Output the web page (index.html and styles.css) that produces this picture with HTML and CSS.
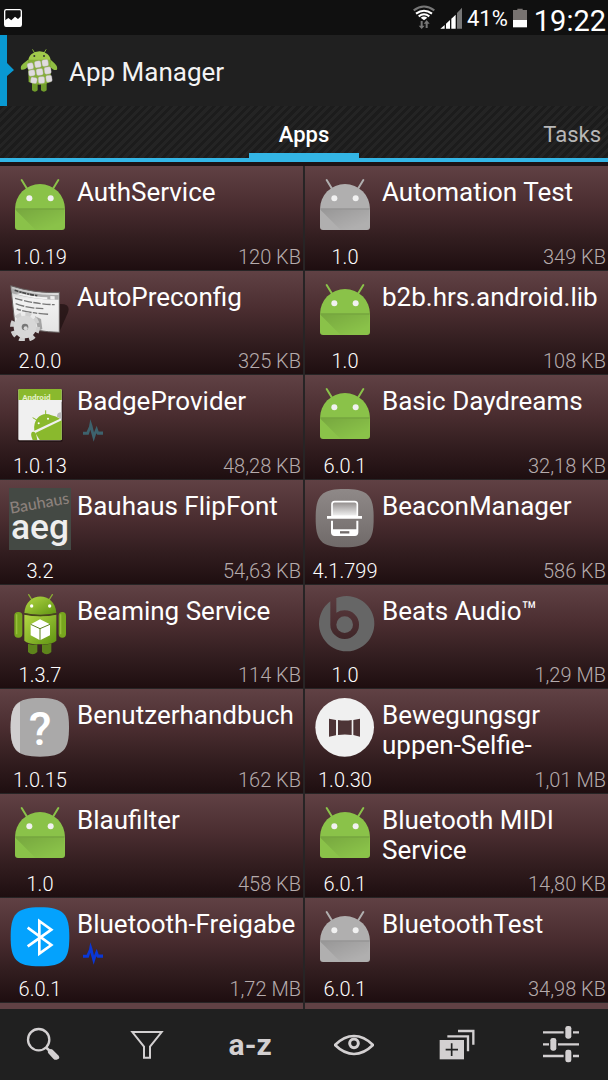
FILE: index.html
```html
<!DOCTYPE html>
<html lang="de">
<head>
<meta charset="utf-8">
<meta name="viewport" content="width=device-width, initial-scale=1">
<title>App Manager</title>
<link rel="stylesheet" href="styles.css">
</head>
<body>
<svg class="defs" aria-hidden="true">
  <defs>
    <linearGradient id="limeBody" x1="0" y1="0" x2="1" y2="1"><stop offset="0" stop-color="#b4d845"/><stop offset="1" stop-color="#5f9412"/></linearGradient>
    <linearGradient id="paper" x1="0" y1="0" x2="0" y2="1"><stop offset="0" stop-color="#b9b9b9"/><stop offset=".3" stop-color="#f2f2f2"/><stop offset="1" stop-color="#e4e4e4"/></linearGradient>
    <linearGradient id="stone" x1="0" y1="0" x2="0" y2="1"><stop offset="0" stop-color="#8f8988"/><stop offset="1" stop-color="#706a69"/></linearGradient>
    <linearGradient id="screen" x1="0" y1="0" x2="0" y2="1"><stop offset="0" stop-color="#8f8a89"/><stop offset="1" stop-color="#f4f4f4"/></linearGradient>
    <linearGradient id="fold" x1="0" y1="0" x2="1" y2="1"><stop offset="0" stop-color="#000" stop-opacity=".14"/><stop offset=".8" stop-color="#000" stop-opacity="0"/></linearGradient>
    <symbol id="head" viewBox="27 27 186 186">
      <path d="M65 45l16 26M175 45l-16 26" fill="none" stroke="currentColor" stroke-width="6" stroke-linecap="round"/>
      <path d="M45 132a75 75 0 0 1 150 0v54a9 9 0 0 1-9 9H54a9 9 0 0 1-9-9z" fill="currentColor"/>
      <path d="M46 134L107 195H186L194 134z" fill="url(#fold)"/>
      <path d="M46 132H194" stroke="#000" stroke-opacity=".22" stroke-width="3"/>
      <circle cx="88" cy="100" r="9" fill="#f1f1f1"/><circle cx="152" cy="100" r="9" fill="#f1f1f1"/>
    </symbol>
    <symbol id="pulse" viewBox="0 0 60 68">
      <path d="M0 38H11L18 22L22 0L28 18L33 40L41 20L47 37H60V47H43L40 42L32 68L26 46L22 32L17 47H0z" fill="currentColor"/>
    </symbol>
  </defs>
</svg>
<div class="screen">
  <div class="status">
    <svg class="status-photo" viewBox="0 0 54 54" aria-hidden="true"><rect x="2" y="2" width="50" height="50" rx="5" fill="none" stroke="#fff" stroke-width="4"/><path d="M3 34l10-7 9 7 11-11 9 7 9-8v30H3z" fill="#fff"/></svg>
    <svg class="status-wifi" viewBox="326 15 66 75" aria-hidden="true">
      <g fill="none" stroke-width="6"><path d="M328 31Q359 8 390 31" stroke="#777"/><path d="M335 41Q359 23 383 41" stroke="#fff"/><path d="M343 49Q359 37 375 49" stroke="#fff"/></g>
      <path d="M349 53Q359 46 369 53L359 61z" fill="#fff"/>
      <path d="M349 63h6v14h6l-9 10-9-10h6zM364 84h6V71h6l-9-11-9 11h6z" fill="#777"/>
    </svg>
    <svg class="status-signal" viewBox="407 20 66 66" aria-hidden="true"><path d="M408 85L421 74V85zM425 70l12-11V85H425zM441 55l13-12V85H441z" fill="#fff"/><path d="M458 38l15-16V85H458z" fill="#777"/></svg>
    <span class="status-charge">41%</span>
    <svg class="status-battery" viewBox="626 23 42 58" aria-hidden="true"><path d="M626 28h13v-4h16v4h13v30H626z" fill="#777270"/><path d="M626 58h42v22H626z" fill="#fff"/></svg>
    <time class="status-time">19:22</time>
  </div>

  <header class="bar">
    <svg class="drawer" viewBox="0 0 14 71" aria-hidden="true"><path d="M0 0H7V28L14 35L7 41V71H0z" fill="#0999d2"/></svg>
    <svg class="logo" viewBox="60 145 114 135" aria-hidden="true">
      <g stroke="#84ac38" stroke-width="3" stroke-linecap="round"><path d="M98 150l7 12M138 150l-7 12"/></g>
      <path d="M85 184a33 29 0 0 1 67 0z" fill="#a1ca4c"/>
      <path d="M84 180l-15 12q-10 9-5 18 12 2 22-12zM152 180l13 12q10 10 5 19-12 2-21-13z" fill="#8fbd42"/>
      <path d="M96 246h17v26q-8 8-17 0zM123 246h17v26q-8 8-17 0z" fill="#719d2c"/>
      <path d="M84 180H152V247q-34 16-66 0z" fill="#85af38"/>
      <g fill="#e0dcdf" stroke="#aaa6a4" stroke-width="1">
        <rect x="82" y="190" width="18" height="19" rx="5" transform="rotate(-12 91 199)"/><rect x="104" y="184" width="19" height="20" rx="5" transform="rotate(-10 113 194)"/><rect x="126" y="180" width="19" height="20" rx="5" transform="rotate(-8 135 190)"/>
        <rect x="86" y="211" width="19" height="18" rx="5" transform="rotate(-8 95 220)"/><rect x="109" y="207" width="20" height="20" rx="5" transform="rotate(-8 119 217)"/><rect x="133" y="202" width="20" height="21" rx="5" transform="rotate(-8 143 212)"/>
        <rect x="92" y="233" width="19" height="18" rx="5" transform="rotate(10 101 242)"/><rect x="115" y="231" width="19" height="20" rx="5" transform="rotate(-3 124 241)"/><rect x="138" y="227" width="18" height="20" rx="5" transform="rotate(-8 147 237)"/>
      </g>
      <circle cx="103" cy="169" r="3" fill="#333"/><circle cx="132" cy="169" r="3" fill="#333"/>
    </svg>
    <h1 class="title">App Manager</h1>
  </header>

  <nav class="tabs" role="tablist">
    <button class="tab tab-active" role="tab" aria-selected="true">Apps</button>
    <button class="tab tab-next" role="tab" aria-selected="false">Tasks</button>
  </nav>

  <ul class="apps">
    <li class="app"><svg class="icon green"><use href="#head"/></svg><div class="main"><span class="name">AuthService</span></div><span class="version">1.0.19</span><span class="size">120 KB</span></li>
    <li class="app"><svg class="icon grey"><use href="#head"/></svg><div class="main"><span class="name">Automation Test</span></div><span class="version">1.0</span><span class="size">349 KB</span></li>
    <li class="app"><svg class="icon" viewBox="27 25 186 186" aria-hidden="true">
        <path d="M178 100Q215 98 203 128L178 184z" fill="#170c0c" opacity=".6"/>
        <path d="M32 45Q105 69 178 65V185Q115 184 45 164z" fill="url(#paper)" stroke="#66605f" stroke-width="3"/>
        <path d="M34 53Q105 76 176 73V87Q105 89 36 68z" fill="#aaa"/><path d="M62 68Q105 79 142 80V86Q100 85 48 70z" fill="#f3f3f3"/>
        <path d="M44 59Q74 69 112 75" stroke="#444" stroke-width="5" stroke-dasharray="12 3 7 2" fill="none"/><path d="M151 76l13 1v10l-13-1z" fill="#eee"/>
        <g fill="none" stroke="#777" stroke-width="4"><path d="M45 83Q110 101 164 102" stroke-dasharray="22 5 25 4"/><path d="M47 99Q85 113 130 114" stroke-dasharray="27 4"/><path d="M50 115Q90 128 148 131" stroke-dasharray="14 4 28 4"/></g>
        <path d="M105 137l18 8 4 30-12 5z" fill="#777" opacity=".6"/>
        <circle cx="75" cy="169" r="38" fill="none" stroke="#cfcfcf" stroke-width="14" stroke-dasharray="17 12.84"/>
        <circle cx="75" cy="169" r="21" fill="none" stroke="#d7d7d7" stroke-width="26"/>
        <circle cx="75" cy="169" r="10" fill="#777"/><circle cx="77" cy="173" r="6" fill="#d9d9d9"/>
      </svg><div class="main"><span class="name">AutoPreconfig</span></div><span class="version">2.0.0</span><span class="size">325 KB</span></li>
    <li class="app"><svg class="icon green"><use href="#head"/></svg><div class="main"><span class="name">b2b.hrs.android.lib</span></div><span class="version">1.0</span><span class="size">108 KB</span></li>
    <li class="app"><svg class="icon" viewBox="27 339 186 186" aria-hidden="true">
        <rect x="53" y="358" width="135" height="158" rx="5" fill="#180c0c" opacity=".55"/>
        <rect x="55" y="357" width="130" height="154" rx="4" fill="#f0f0f0"/><path d="M55 390V361q0-4 4-4H181q4 0 4 4v29z" fill="#8ab92d"/>
        <text class="badge-text" x="67" y="391">Android</text><path d="M58 390h127v5H58z" fill="#f0f0f0"/>
        <path d="M185 427q-15 0-14 13l14 8z" fill="#b9b9b9"/>
        <g fill="#8ab92d"><path d="M103 482C98 444 129 423 154 436Q168 439 180 446z"/><path d="M106 489L185 451V510H119z"/><path d="M96 486q10-4 13 10l3 14H98q-8-18-2-24z"/></g>
        <path d="M98 443l14 8M137 421v15" stroke="#8ab92d" stroke-width="3"/><circle cx="116" cy="460" r="3" fill="#fff"/><circle cx="144" cy="446" r="3" fill="#fff"/>
      </svg><div class="main"><span class="name">BadgeProvider</span><svg class="pulse idle"><use href="#pulse"/></svg></div><span class="version">1.0.13</span><span class="size">48,28 KB</span></li>
    <li class="app"><svg class="icon green"><use href="#head"/></svg><div class="main"><span class="name">Basic Daydreams</span></div><span class="version">6.0.1</span><span class="size">32,18 KB</span></li>
    <li class="app"><svg class="icon" viewBox="27 24 186 186" aria-hidden="true">
        <path d="M27 24H213V210H27z" fill="#444944"/>
        <text class="font-label" x="32" y="101" transform="rotate(-10 32 101)">Bauhaus</text><text class="font-sample" x="120" y="178">aeg</text>
      </svg><div class="main"><span class="name">Bauhaus FlipFont</span></div><span class="version">3.2</span><span class="size">54,63 KB</span></li>
    <li class="app"><svg class="icon" viewBox="30 24 186 186" aria-hidden="true">
        <path d="M35 115C35 48 50 27 122 27S209 48 209 115 194 202 122 202 35 182 35 115z" fill="url(#stone)"/>
        <path d="M84 109V73q0-8 8-8h60q8 0 8 8v36z" fill="url(#screen)" stroke="#fff" stroke-width="5"/>
        <path d="M69 112H174" stroke="#fff" stroke-width="8"/><path d="M84 122V157q0 8 8 8h60q8 0 8-8V122" fill="none" stroke="#fff" stroke-width="6"/><path d="M84 148h76v12q0 6-6 6H90q-6 0-6-6z" fill="#fff"/><path d="M108 157h28" stroke="#716b6a" stroke-width="7"/>
      </svg><div class="main"><span class="name">BeaconManager</span></div><span class="version">4.1.799</span><span class="size">586 KB</span></li>
    <li class="app"><svg class="icon" viewBox="27 337 186 186" aria-hidden="true">
        <path d="M86 342l10 16M157 342l-10 16" stroke="#8aad32" stroke-width="4" stroke-linecap="round"/>
        <path d="M73 397C77 331 165 331 169 397Q121 407 73 397z" fill="url(#limeBody)"/>
        <path d="M73 402Q121 411 169 402V480Q160 491 121 491T73 480z" fill="url(#limeBody)"/>
        <g fill="#77a51e"><rect x="43" y="394" width="24" height="77" rx="11"/><rect x="176" y="394" width="22" height="77" rx="11"/><path d="M84 489q14 5 28 2v23q-14 14-28 0zM126 491q14 2 28-3v26q-14 14-28 0z" fill="#5e851b"/></g>
        <path d="M50 401v60M182 401v60" stroke="#98c03b" stroke-width="4"/>
        <path d="M73 399Q121 411 169 399" fill="none" stroke="#42510e" stroke-width="3"/>
        <circle cx="95" cy="376" r="5" fill="#fff"/><circle cx="149" cy="376" r="5" fill="#fff"/>
        <path d="M120 416l30 15v33l-30 15-28-15v-33z" fill="#fff"/><path d="M92 431l28 13 30-13M120 444v35" fill="none" stroke="#5e831b" stroke-width="3"/>
      </svg><div class="main"><span class="name">Beaming Service</span></div><span class="version">1.3.7</span><span class="size">114 KB</span></li>
    <li class="app"><svg class="icon" viewBox="30 337 186 186" aria-hidden="true">
        <path d="M79 362V432a43 43 0 1 0 43-43q-14 0-25 7V352A83 83 0 1 1 79 362z" fill="#666" fill-rule="evenodd"/><circle cx="122" cy="432" r="25" fill="#666"/>
      </svg><div class="main"><span class="name">Beats Audio™</span></div><span class="version">1.0</span><span class="size">1,29 MB</span></li>
    <li class="app"><svg class="icon" viewBox="27 21 186 186" aria-hidden="true">
        <path d="M32 112C32 45 48 24 120 24S207 45 207 112 192 200 120 200 32 180 32 112z" fill="#aaa9a9"/><path d="M60 36V189C38 176 32 151 32 112S38 48 60 36z" fill="#d0cecf"/>
        <text class="question" x="120" y="164">?</text>
      </svg><div class="main"><span class="name">Benutzerhandbuch</span></div><span class="version">1.0.15</span><span class="size">162 KB</span></li>
    <li class="app"><svg class="icon" viewBox="30 21 186 186" aria-hidden="true">
        <circle cx="122" cy="112" r="88" fill="#f0f0f0"/><path d="M75 86l21 4v46l-21 4zM102 90q21 3 41 0v45q-20-3-41 0zM148 90l20-4v54l-20-5z" fill="#4d3436"/>
      </svg><div class="main"><span class="name">Bewegungsgr<br>uppen-Selfie-</span></div><span class="version">1.0.30</span><span class="size">1,01 MB</span></li>
    <li class="app"><svg class="icon green"><use href="#head"/></svg><div class="main"><span class="name">Blaufilter</span></div><span class="version">1.0</span><span class="size">458 KB</span></li>
    <li class="app"><svg class="icon green"><use href="#head"/></svg><div class="main"><span class="name">Bluetooth MIDI Service</span></div><span class="version">6.0.1</span><span class="size">14,80 KB</span></li>
    <li class="app"><svg class="icon" viewBox="27 33 186 186" aria-hidden="true">
        <path d="M32 126C32 59 48 37 120 37S208 59 208 126 192 214 120 214 32 193 32 126z" fill="#04a2fd"/><path d="M83 98L154 150L118 176V78L154 104L83 154" fill="none" stroke="#fff" stroke-width="8"/>
      </svg><div class="main"><span class="name">Bluetooth-Freigabe</span><svg class="pulse active"><use href="#pulse"/></svg></div><span class="version">6.0.1</span><span class="size">1,72 MB</span></li>
    <li class="app"><svg class="icon grey"><use href="#head"/></svg><div class="main"><span class="name">BluetoothTest</span></div><span class="version">6.0.1</span><span class="size">34,98 KB</span></li>
    <li class="app-peek"></li>
    <li class="app-peek"></li>
  </ul>

  <footer class="actions">
    <button class="action" aria-label="Suchen"><svg viewBox="69 390 120 120"><circle cx="116" cy="434" r="32" fill="none" stroke="#d3d0d1" stroke-width="7"/><path d="M139 458l10 9" stroke="#d3d0d1" stroke-width="8"/><path d="M144 468q6-9 14-4l18 18q5 8-3 11-7 4-13-2l-15-16q-3-4-1-7z" fill="#d3d0d1"/></svg></button>
    <button class="action" aria-label="Filtern"><svg viewBox="381 394 120 120"><path d="M397 415H485L450 459V492H432V459z" fill="none" stroke="#d3d0d1" stroke-width="6"/></svg></button>
    <button class="action sort" aria-label="Sortieren">a-z</button>
    <button class="action" aria-label="Anzeigen"><svg viewBox="90 390 120 120"><path d="M93 450Q120 423 150 423T207 450Q179 477 150 477T93 450z" fill="none" stroke="#d3d0d1" stroke-width="8"/><circle cx="150" cy="445" r="13" fill="none" stroke="#d3d0d1" stroke-width="9"/></svg></button>
    <button class="action" aria-label="Mehrfachauswahl"><svg viewBox="401 390 120 120"><path d="M409 435h73v58H409z" fill="#d3d0d1"/><path d="M427 464h37M445 445v38" stroke="#222" stroke-width="5"/><path d="M432 424H494V469M464 408H510V449" fill="none" stroke="#d3d0d1" stroke-width="7"/></svg></button>
    <button class="action" aria-label="Einstellungen"><svg viewBox="712 390 120 120"><path d="M718 412h62M808 412h18M718 448h18M763 448h63M718 483h62M808 483h18" stroke="#d3d0d1" stroke-width="7"/><g fill="#d3d0d1"><rect x="785" y="393" width="18" height="38" rx="7"/><rect x="740" y="429" width="18" height="38" rx="7"/><rect x="785" y="464" width="18" height="38" rx="7"/></g></svg></button>
  </footer>
</div>
</body>
</html>
```
FILE: styles.css
```css
* {
  box-sizing: border-box;
}

body {
  margin: 0;
  background: #202020;
  color: #fff;
  font-family: Roboto, "Noto Sans", sans-serif;
}

button {
  border: 0;
  padding: 0;
  background: none;
  color: inherit;
  font: inherit;
}

.defs {
  position: absolute;
  width: 0;
  height: 0;
}

.screen {
  display: flex;
  flex-direction: column;
  min-height: 100vh;
}

.status {
  display: flex;
  align-items: center;
  height: 35px;
  padding: 0 2px 0 4px;
  background: #101010;
}

.status-photo {
  width: 18px;
  height: 18px;
  margin-right: auto;
}

.status-wifi {
  width: 22px;
  height: 25px;
  margin-right: 5px;
}

.status-signal {
  width: 22px;
  height: 22px;
  margin-right: 5px;
}

.status-charge {
  padding-top: 2px;
  margin-right: 5px;
  font-size: 22px;
}

.status-battery {
  width: 14px;
  height: 20px;
  margin-right: 7px;
}

.status-time {
  padding-top: 6px;
  font-size: 29px;
}

.bar {
  display: flex;
  align-items: center;
  height: 71px;
  background: #202020;
}

.drawer {
  width: 14px;
  height: 71px;
}

.logo {
  width: 38px;
  height: 45px;
  margin: 0 11px 0 6px;
}

.title {
  margin: 0;
  padding-top: 2px;
  color: #f3f3f3;
  font-size: 26px;
  font-weight: 400;
}

.tabs {
  display: grid;
  grid-template-columns: 1fr auto 1fr;
  height: 56px;
  border-bottom: 4px solid #33b5e5;
  background: repeating-linear-gradient(135deg, #1c1c1c 0 3px, #242424 3px 6px);
}

.tab {
  line-height: 26px;
  font-size: 22px;
}

.tab-active {
  grid-column: 2;
  padding: 11px 30px 0;
  border-bottom: 5px solid #33b5e5;
  font-weight: 500;
}

.tab-next {
  justify-self: end;
  padding: 11px 7px 0 0;
  border-bottom: 5px solid transparent;
  color: #b8b8b8;
}

.apps {
  display: grid;
  flex: 1;
  grid-template-columns: 1fr 1fr;
  grid-template-rows: repeat(8, 1fr) 6px;
  gap: 1px 2px;
  margin: 0;
  padding: 0;
  border-top: 4px solid #1d1214;
  background: #272425;
  list-style: none;
}

.app {
  display: grid;
  grid-template-columns: 74px 1fr;
  grid-template-rows: 1fr auto;
  padding: 8px 2px 1px 3px;
  background: linear-gradient(#604144, #4a2d30 38%, #331e20 68%, #1e0e10);
}

.app-peek {
  background: #604144;
}

.icon {
  width: 62px;
  height: 62px;
  justify-self: center;
}

.green {
  color: #8ac249;
}

.grey {
  color: #b0afaf;
}

.main {
  display: flex;
  flex-direction: column;
  padding-top: 3px;
}

.name {
  font-size: 26px;
  line-height: 30px;
}

.pulse {
  width: 20px;
  height: 23px;
  margin: 3px 0 0 6px;
}

.idle {
  color: #3d626d;
}

.active {
  color: #0a37d5;
}

.version,
.size {
  font-size: 20px;
  font-weight: 300;
  line-height: 24px;
}

.version {
  justify-self: center;
  white-space: nowrap;
}

.size {
  color: #b5abac;
  text-align: right;
}

.badge-text {
  fill: #e5f0c9;
  font: 700 24px Roboto, sans-serif;
}

.font-label {
  fill: #8c817c;
  font: 500 48px Lato, sans-serif;
}

.font-sample {
  fill: #eee;
  font: 500 106px Roboto, sans-serif;
  text-anchor: middle;
}

.question {
  fill: #fff;
  font: 500 140px Roboto, sans-serif;
  text-anchor: middle;
}

.actions {
  display: flex;
  align-items: center;
  justify-content: space-between;
  height: 71px;
  padding: 0 12px 0 8px;
  background: #202020;
}

.action {
  display: flex;
  align-items: center;
  justify-content: center;
  width: 70px;
  height: 70px;
}

.action svg {
  width: 40px;
  height: 40px;
}

.sort {
  color: #d3d0d1;
  font-size: 30px;
  font-weight: 700;
}
```
